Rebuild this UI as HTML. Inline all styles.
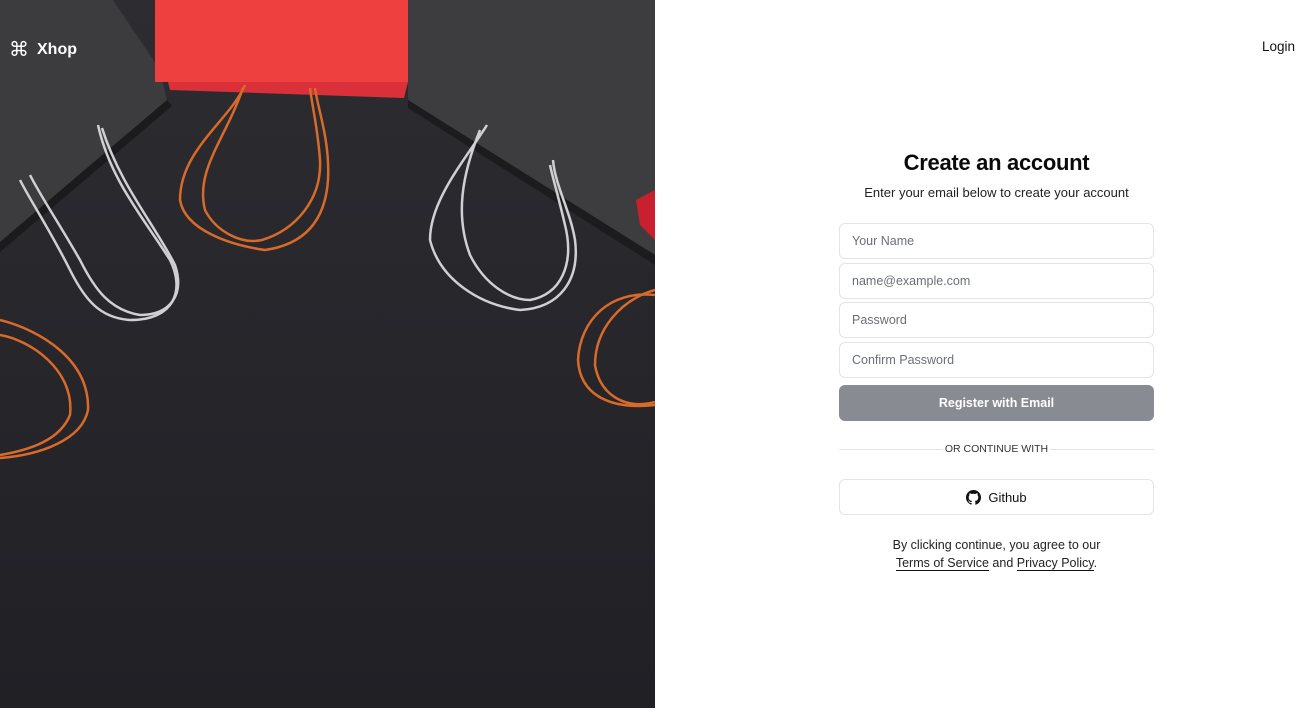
<!DOCTYPE html>
<html><head><meta charset="utf-8"><style>
*{margin:0;padding:0;box-sizing:border-box}
body{width:1310px;height:708px;overflow:hidden;font-family:"Liberation Sans",sans-serif;background:#fff;position:relative}
.left{position:absolute;left:0;top:0;width:655px;height:708px}
.logo{position:absolute;left:9px;top:37px;color:#fff;font-weight:bold;font-size:16px;display:flex;align-items:center;gap:8px}
.login{position:absolute;right:15px;top:39px;font-size:13.5px;color:#111}
.form{position:absolute;left:839px;top:0;width:315px}
h1{position:absolute;top:150px;left:0;width:315px;text-align:center;font-size:22px;font-weight:bold;color:#0a0a0a;letter-spacing:-0.3px}
.sub{position:absolute;top:185px;left:-20px;width:355px;text-align:center;font-size:13px;color:#222}
.in{position:absolute;left:0;width:315px;height:36px;border:1px solid #e2e4e8;border-radius:6px;font-size:12.5px;color:#6b6f76;padding:10px 12px}
.btn{position:absolute;left:0;top:385px;width:315px;height:36px;border-radius:6px;background:#888b92;color:#fff;font-weight:bold;font-size:12.5px;text-align:center;line-height:36px}
.or{position:absolute;left:0;top:449px;width:315px;height:1px;background:#e2e4e8}
.ort{position:absolute;top:443px;left:0;width:315px;text-align:center;font-size:10.5px;color:#333}
.ort span{background:#fff;padding:0 2px}
.gh{position:absolute;left:0;top:479px;width:315px;height:36px;border:1px solid #e2e4e8;border-radius:6px;font-size:13px;color:#111;display:flex;align-items:center;justify-content:center;gap:7px}
.terms{position:absolute;top:536px;left:0;width:315px;text-align:center;font-size:12.5px;line-height:18px;color:#222}
.terms u{text-decoration:none;border-bottom:1px solid #111}
</style></head><body>
<div class="left">
<svg width="655" height="708" viewBox="0 0 655 708">
<defs><linearGradient id="g" x1="0" y1="0" x2="0" y2="1"><stop offset="0" stop-color="#2c2c31"/><stop offset="1" stop-color="#202025"/></linearGradient></defs>
<rect width="655" height="708" fill="url(#g)"/>
<polygon points="0,0 113,0 160,70 167,100 0,242" fill="#3c3c3f"/>
<polygon points="0,242 167,100 172,106 0,252" fill="#1b1b1e"/>
<polygon points="408,0 655,0 655,255 408,100" fill="#3d3d40"/>
<polygon points="408,100 655,255 655,265 408,108" fill="#1c1c1f"/>
<polygon points="636,200 655,190 655,240 640,225" fill="#c8202e"/>
<rect x="155" y="0" width="253" height="82" fill="#ef4040"/>
<polygon points="168,82 408,82 404,98 170,90" fill="#d9303a"/>
<g fill="none" stroke="#d86a2a" stroke-width="2.5">
<path d="M245,85 C230,120 180,150 180,200 C185,230 230,245 265,250 C300,245 325,225 328,180 C330,140 318,110 315,88"/>
<path d="M243,88 C225,140 195,170 205,210 C215,230 240,245 262,240 C295,230 322,200 320,160 C318,130 312,105 310,88"/>
<path d="M0,320 C40,330 90,360 88,410 C82,440 40,455 0,458"/>
<path d="M0,335 C30,340 75,370 70,415 C60,440 30,450 0,455"/>
<path d="M655,295 C610,290 580,320 578,360 C580,395 610,410 655,405"/>
<path d="M655,290 C620,300 595,330 595,365 C600,395 625,410 655,402"/>
</g>
<g fill="none" stroke="#d0d0d4" stroke-width="2.5">
<path d="M98,125 C110,180 145,220 170,260 C185,290 175,320 130,320 C100,318 85,300 70,270 C50,230 30,200 20,180"/>
<path d="M102,128 C120,185 155,225 175,265 C185,295 170,315 140,315 C110,310 95,290 80,260 C60,225 40,195 30,175"/>
<path d="M487,125 C465,160 430,200 430,240 C440,280 480,305 520,310 C560,308 580,280 575,240 C570,210 555,185 553,160"/>
<path d="M480,130 C462,175 455,215 470,255 C485,285 510,300 530,300 C560,295 575,265 565,225 C558,195 552,175 550,165"/>
</g>
</svg>
<div class="logo"><span style="font-size:20px;font-weight:normal">⌘</span>Xhop</div>
</div>
<div class="login">Login</div>
<div class="form">
<h1>Create an account</h1>
<div class="sub">Enter your email below to create your account</div>
<div class="in" style="top:223px">Your Name</div>
<div class="in" style="top:263px">name@example.com</div>
<div class="in" style="top:302px">Password</div>
<div class="in" style="top:342px">Confirm Password</div>
<div class="btn">Register with Email</div>
<div class="or"></div>
<div class="ort"><span>OR CONTINUE WITH</span></div>
<div class="gh"><svg width="15" height="15" viewBox="0 0 16 16"><path fill="#111" d="M8 0C3.58 0 0 3.58 0 8c0 3.540 2.29 6.53 5.47 7.59.4.07.55-.17.55-.38v-1.4C3.78 14.3 3.31 12.9 3.310 12.9c-.36-.92-.89-1.17-.89-1.17-.73-.5.06-.49.06-.49.8.06 1.23.83 1.23.83.71 1.22 1.87.87 2.33.66.07-.52.28-.87.51-1.07-1.78-.2-3.64-.89-3.64-3.95 0-.87.31-1.59.82-2.15-.08-.2-.36-1.020.08-2.12 0 0 .67-.21 2.2.82a7.6 7.6 0 014 0c1.53-1.04 2.2-.82 2.2-.82.44 1.1.16 1.92.08 2.12.51.56.82 1.27.82 2.15 0 3.07-1.87 3.75-3.65 3.95.29.25.54.73.54 1.48v2.2c0 .21.15.46.55.38A8 8 0 0016 8c0-4.42-3.58-8-8-8z"/></svg>Github</div>
<div class="terms">By clicking continue, you agree to our<br><u>Terms of Service</u> and <u>Privacy Policy</u>.</div>
</div>
</body></html>
